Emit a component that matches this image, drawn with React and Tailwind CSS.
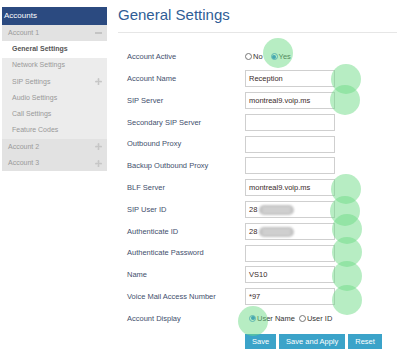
import React from "react";

const sub = [
  { label: "General Settings", active: true },
  { label: "Network Settings" },
  { label: "SIP Settings", plus: true },
  { label: "Audio Settings" },
  { label: "Call Settings" },
  { label: "Feature Codes" },
];

const fields = [
  { label: "Account Name", value: "Reception" },
  { label: "SIP Server", value: "montreal9.voip.ms" },
  { label: "Secondary SIP Server", value: "" },
  { label: "Outbound Proxy", value: "" },
  { label: "Backup Outbound Proxy", value: "" },
  { label: "BLF Server", value: "montreal9.voip.ms" },
  { label: "SIP User ID", value: "28", hidden: true },
  { label: "Authenticate ID", value: "28", hidden: true },
  { label: "Authenticate Password", value: "" },
  { label: "Name", value: "VS10" },
  { label: "Voice Mail Access Number", value: "*97" },
];

const marks = [
  [278, 53],
  [346, 79],
  [345, 100],
  [346, 189],
  [345, 211],
  [347, 229],
  [347, 252],
  [347, 276],
  [347, 300],
  [253, 321],
];

function Plus() {
  return (
    <svg width="7" height="7" viewBox="0 0 8 8" className="text-[#c6c6c6]">
      <path d="M3.2 1.2h1.6v2h2v1.6h-2v2H3.2v-2h-2V3.2h2z" fill="currentColor" />
      <circle cx="4" cy="1" r="1" fill="currentColor" />
      <circle cx="4" cy="7" r="1" fill="currentColor" />
      <circle cx="1" cy="4" r="1" fill="currentColor" />
      <circle cx="7" cy="4" r="1" fill="currentColor" />
    </svg>
  );
}

function Radio({ checked }) {
  return (
    <span
      className={
        "inline-flex items-center justify-center w-[7px] h-[7px] rounded-full border " +
        (checked ? "border-[#4a90d9] bg-white" : "border-[#777] bg-white")
      }
    >
      {checked && <span className="w-[4px] h-[4px] rounded-full bg-[#1a73d9]" />}
    </span>
  );
}

function Row({ label, children }) {
  return (
    <div className="flex items-center h-[21.8px]">
      <div className="w-[118px] text-[7.5px] text-[#3f4f6d]">{label}</div>
      {children}
    </div>
  );
}

function Field({ value, hidden }) {
  return (
    <div className="relative w-[90px] h-[17px] border border-[#cfcfcf] bg-white flex items-center pl-[3px] text-[7.5px] text-[#3a2a2a]">
      {value}
      {hidden && (
        <div className="absolute left-[13px] top-[3px] w-[35px] h-[10px] rounded-full bg-[#c4c4c4] blur-[1px] flex flex-col justify-center gap-[2px] px-[4px]">
          <div className="h-[1px] bg-[#e6e6e6]" />
          <div className="h-[1px] bg-[#e6e6e6]" />
        </div>
      )}
    </div>
  );
}

export default function App() {
  return (
    <div className="relative w-[397px] h-[360px] bg-white overflow-hidden" style={{ fontFamily: '"Liberation Sans", Arial, sans-serif' }}>
      <div className="flex">
        <div className="w-[105px] ml-[2px] mt-[7px] shrink-0">
          <div className="h-[18px] bg-[#2b4a80] text-white text-[8px] flex items-center pl-[2px]">Accounts</div>
          <div className="h-[16.25px] bg-[#e2e2e2] text-[7px] text-[#9a9a9a] flex items-center justify-between pl-[6px] pr-[5px]">
            <span>Account 1</span>
            <span className="w-[7px] h-[2px] bg-[#c4c4c4]" />
          </div>
          {sub.map((s) => (
            <div
              key={s.label}
              className={
                "h-[16.25px] text-[7px] flex items-center justify-between pl-[10px] pr-[5px] " +
                (s.active ? "bg-white text-[#555] font-semibold" : "bg-[#ececec] text-[#999]")
              }
            >
              <span>{s.label}</span>
              {s.plus && <Plus />}
            </div>
          ))}
          {["Account 2", "Account 3"].map((a) => (
            <div key={a} className="h-[16.25px] bg-[#e2e2e2] text-[7px] text-[#9a9a9a] flex items-center justify-between pl-[6px] pr-[5px]">
              <span>{a}</span>
              <Plus />
            </div>
          ))}
        </div>

        <div className="flex-1 ml-[11px]">
          <div className="h-[33px] border-b border-[#e6e6e6] pt-[6px]">
            <h1 className="text-[15px] leading-[18px] text-[#2f5d96]">General Settings</h1>
          </div>
          <div className="pl-[9px] pt-[13px]">
            <Row label="Account Active">
              <div className="flex items-center text-[7.5px] text-[#333] gap-[1px]">
                <Radio />
                <span className="mr-[7px]">No</span>
                <Radio checked />
                <span>Yes</span>
              </div>
            </Row>
            {fields.map((f) => (
              <Row key={f.label} label={f.label}>
                <Field value={f.value} hidden={f.hidden} />
              </Row>
            ))}
            <Row label="Account Display">
              <div className="flex items-center text-[7.5px] text-[#333] gap-[1px] pl-[4px]">
                <Radio checked />
                <span className="mr-[3px]">User Name</span>
                <Radio />
                <span>User ID</span>
              </div>
            </Row>
            <div className="flex gap-[3px] ml-[118px] mt-[5px]">
              {["Save", "Save and Apply", "Reset"].map((b) => (
                <button key={b} className="h-[15px] px-[7px] bg-[#3ba3c9] text-white text-[7.5px]">
                  {b}
                </button>
              ))}
            </div>
          </div>
        </div>
      </div>

      {marks.map(([x, y], i) => (
        <div
          key={i}
          className="absolute w-[30px] h-[30px] rounded-full bg-[#6fdc87]/50 pointer-events-none"
          style={{ left: x - 15, top: y - 15 }}
        />
      ))}
    </div>
  );
}
